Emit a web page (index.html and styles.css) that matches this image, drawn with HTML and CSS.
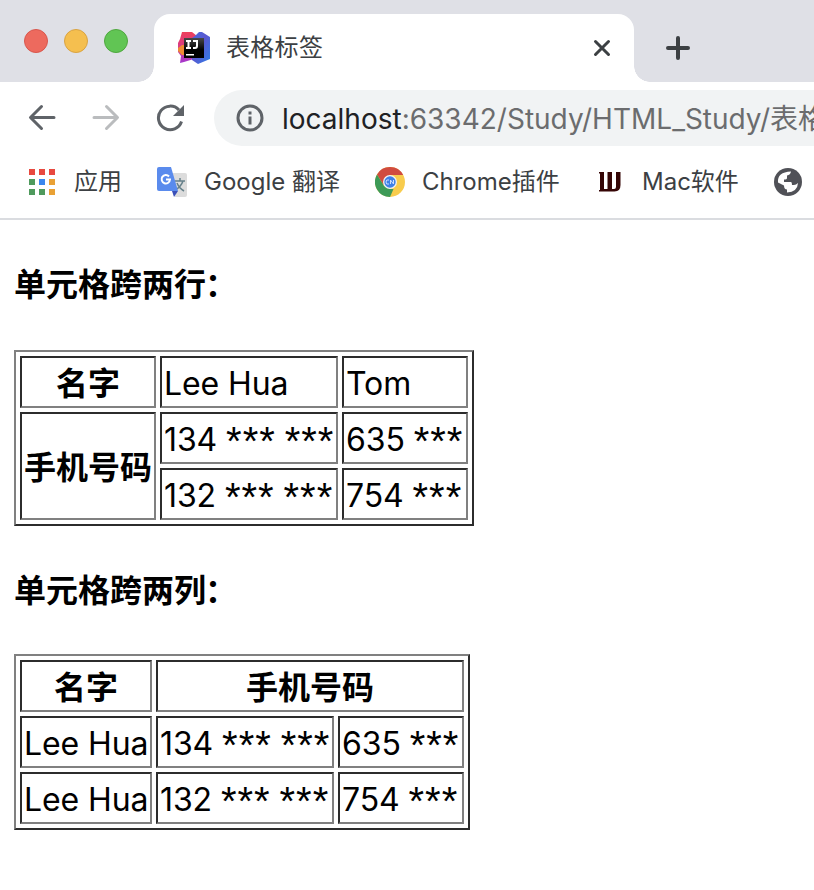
FILE: index.html
```html
<!DOCTYPE html>
<html lang="zh">
<head>
<meta charset="utf-8">
<title>表格标签</title>
<link rel="stylesheet" href="styles.css">
</head>
<body>
<header class="browser">
  <div class="tabstrip">
    <div class="lights"><i class="light red"></i><i class="light yellow"></i><i class="light green"></i></div>
    <div class="tab">
      <svg class="favicon" width="34" height="34" viewBox="0 0 34 34">
        <defs>
          <linearGradient id="idea-blue" x1="0" y1="0" x2="1" y2="1"><stop offset="0" stop-color="#4569e0"/><stop offset=".45" stop-color="#5b58cf"/><stop offset="1" stop-color="#2b7de9"/></linearGradient>
          <linearGradient id="idea-red" x1="0" y1="0" x2="0" y2="1"><stop offset="0" stop-color="#ee3f5a"/><stop offset=".4" stop-color="#dc3c80"/><stop offset="1" stop-color="#a336cf"/></linearGradient>
          <linearGradient id="idea-black" x1="0" y1="0" x2="0" y2="1"><stop offset="0" stop-color="#484848"/><stop offset=".6" stop-color="#000"/></linearGradient>
        </defs>
        <path fill="url(#idea-red)" d="M5 1h10l5 4v22l-13 4-4 1 1-7-3-4V12l2-4z"/>
        <path fill="#ef8a35" d="M1 17l4-3h4v10H5l-4-4z"/>
        <path fill="url(#idea-blue)" d="M18 5l4-4h3l8 5v22l-12 5-6-4V7z"/>
        <path fill="url(#idea-black)" d="M7 7h20v20H7z"/>
        <path fill="none" stroke="#fff" stroke-width="2" d="M9 10h5M11.500 10v7M9 17h5M16 10h4v5q0 2-2 2h-2"/>
        <path fill="#fff" d="M9 23h8v1.500H9z"/>
      </svg>
      <span class="tab-title">表格标签</span>
      <svg class="close" width="18" height="18" viewBox="0 0 18 18"><path d="M2.500 2.500l13 13M15.500 2.500l-13 13"/></svg>
    </div>
    <svg class="newtab" width="26" height="26" viewBox="0 0 26 26"><path d="M13 3v20M3 13h20"/></svg>
  </div>
  <nav class="toolbar">
    <svg class="nav" width="28" height="28" viewBox="0 0 28 28"><path d="M26 13.500H3M13.500 2.500L2.500 13.500 13.500 24.500"/></svg>
    <svg class="nav off" width="28" height="28" viewBox="0 0 28 28"><path d="M2 13.500h23M14.500 2.500L25.500 13.500 14.500 24.500"/></svg>
    <svg class="nav reload" width="30" height="30" viewBox="0 0 30 30"><path d="M25.500 18.500A11.800 11.800 0 1 1 23 7"/><path class="fill" d="M28 2v11H17z"/></svg>
    <div class="omnibox">
      <svg class="info" width="28" height="28" viewBox="0 0 28 28"><circle cx="14" cy="14" r="12"/><path d="M14 12.500v8M14 7.500v3"/></svg>
      <span class="url"><span class="host">localhost</span>:63342/Study/HTML_Study/表格</span>
    </div>
  </nav>
  <nav class="bookmarks">
    <svg class="apps" width="26" height="26" viewBox="0 0 26 26"><path fill="#e8493f" d="M0 0h6v6H0zM10 0h6v6h-6zM20 0h6v6h-6z"/><path fill="#4f9a5d" d="M0 10h6v6H0zM0 20h6v6H0zM10 20h6v6h-6z"/><path fill="#3b87ee" d="M10 10h6v6h-6z"/><path fill="#e9a135" d="M20 10h6v6h-6zM20 20h6v6h-6z"/></svg>
    <span class="label apps-label">应用</span>
    <svg class="translate" width="30" height="30" viewBox="0 0 30 30">
      <path fill="#dcdcdc" d="M14 6h14q2 0 2 2v20q0 2-2 2H18z"/>
      <path fill="none" stroke="#66808a" stroke-width="1.500" d="M18 14h10M23 11v3M26 14q-2 6-8 9M20 16q2 5 7 8"/>
      <path fill="#3a4fb8" d="M15 24h6l-4 6z"/>
      <path fill="#5a8bed" d="M2 0h12l7 24H2q-2 0-2-2V2q0-2 2-2z"/>
      <path fill="none" stroke="#fff" stroke-width="2" d="M12 9.500A4.200 4.200 0 1 0 13 12.500H9"/>
    </svg>
    <span class="label translate-label">Google 翻译</span>
    <svg class="chrome" width="30" height="30" viewBox="0 0 30 30">
      <circle cx="15" cy="15" r="15" fill="#f8cc4d"/>
      <path fill="#d04b40" d="M2 7.500A15 15 0 0 1 28.200 8H15L8.800 18.500z"/>
      <path fill="#3d9a57" d="M2 7.500L8.800 18.500 15 22h3.500L15 30A15 15 0 0 1 2 7.500z"/>
      <circle cx="15" cy="15" r="7" fill="#f2f2f2"/><circle cx="15" cy="15" r="5.700" fill="#3f80e8"/>
      <path fill="none" stroke="#c9dcff" stroke-width="1" d="M14 13q-3-1-3 2t3 2M15.500 17v-4l3 4v-4"/>
    </svg>
    <span class="label chrome-label">Chrome插件</span>
    <svg class="wicon" width="22" height="20" viewBox="0 0 22 20"><path fill="#350505" d="M0 0h5v17h3.500V0H13v17h2q2 0 2-2V0h4.500v13q0 6.500-6 6.500H0V18h1V1.500H0z"/></svg>
    <span class="label mac-label">Mac软件</span>
    <svg class="globe" width="28" height="28" viewBox="0 0 28 28"><circle cx="14" cy="14" r="14" fill="#505157"/><path fill="#fff" d="M17 3.500Q16.500 7 13 7.500V10q0 1.500-3 1.500V14h7q1 0 1 3h2q2 0 4-2-.5 9-11 9.500v-3q-3 0-3-4L4 14.500Q3 4 17 3.500z"/></svg>
  </nav>
</header>
<main class="page">
  <h4>单元格跨两行<span class="colon">：</span></h4>
  <table>
    <colgroup><col class="c136"><col class="c178"><col class="c126"></colgroup>
    <tr><th>名字</th><td>Lee Hua</td><td>Tom</td></tr>
    <tr><th rowspan="2">手机号码</th><td>134 <span class="mask">***</span> <span class="mask">***</span></td><td>635 <span class="mask">***</span></td></tr>
    <tr><td>132 <span class="mask">***</span> <span class="mask">***</span></td><td>754 <span class="mask">***</span></td></tr>
  </table>
  <h4>单元格跨两列<span class="colon">：</span></h4>
  <table>
    <colgroup><col class="c132"><col class="c178"><col class="c126"></colgroup>
    <tr><th>名字</th><th colspan="2">手机号码</th></tr>
    <tr><td>Lee Hua</td><td>134 <span class="mask">***</span> <span class="mask">***</span></td><td>635 <span class="mask">***</span></td></tr>
    <tr><td>Lee Hua</td><td>132 <span class="mask">***</span> <span class="mask">***</span></td><td>754 <span class="mask">***</span></td></tr>
  </table>
</main>
</body>
</html>
```
FILE: styles.css
```css
* { box-sizing: border-box; }
body { margin: 0; background: #fff; color: #000; overflow: hidden; font-family: Inter, "Noto Sans CJK SC", sans-serif; }
svg { display: block; flex: none; }
.browser { height: 220px; border-bottom: 2px solid #dadce0; }
.tabstrip { display: flex; height: 82px; padding-top: 14px; background: #dfe0e6; }
.lights { display: flex; gap: 16px; width: 154px; padding: 15px 0 0 24px; }
.light { width: 24px; height: 24px; border-radius: 50%; border: 1px solid; }
.red { background: #ed6a5e; border-color: #d8574d; }
.yellow { background: #f5bf4f; border-color: #d9a343; }
.green { background: #61c554; border-color: #4fa73f; }
.tab { position: relative; display: flex; align-items: center; width: 480px; height: 68px; padding: 0 24px 0 23px; border-radius: 16px 16px 0 0; background: #fff; }
.tab::before, .tab::after { content: ""; position: absolute; bottom: 0; width: 16px; height: 16px; }
.tab::before { left: -16px; background: radial-gradient(circle at 0 0, transparent 15.5px, #fff 16px); }
.tab::after { right: -16px; background: radial-gradient(circle at 100% 0, transparent 15.5px, #fff 16px); }
.tab-title { flex: 1; margin-left: 15px; font-size: 24px; letter-spacing: .3px; line-height: 34px; color: #3c4043; }
.close { margin-right: -1px; fill: none; stroke: #3c4043; stroke-width: 3; stroke-linecap: round; }
.newtab { margin: 21px 0 0 31px; fill: none; stroke: #3c4043; stroke-width: 4; stroke-linecap: round; }
.toolbar { display: flex; align-items: center; height: 72px; padding-left: 28px; }
.nav { margin-right: 36px; fill: none; stroke: #5f6368; stroke-width: 3; stroke-linecap: round; stroke-linejoin: round; }
.nav.off { stroke: #babcbe; }
.nav.reload { margin: 0 28px 0 0; stroke-linecap: butt; }
.nav .fill { fill: #5f6368; stroke: none; }
.omnibox { display: flex; align-items: center; flex: 1; min-width: 0; height: 56px; padding-left: 22px; border-radius: 28px 0 0 28px; background: #f1f3f4; overflow: hidden; }
.info { fill: none; stroke: #5f6368; stroke-width: 3; }
.url { margin-left: 18px; padding-top: 1px; font-size: 28px; line-height: 40px; color: #6b6c6e; white-space: nowrap; }
.host { color: #202124; }
.bookmarks { display: flex; align-items: center; height: 56px; padding-left: 29px; }
.label { font-size: 24px; line-height: 34px; white-space: nowrap; color: #3c4043; }
.apps-label { width: 64px; margin: 0 19px; }
.translate-label { width: 152px; margin-left: 17px; }
.chrome { margin-left: 19px; }
.chrome-label { width: 157px; margin-left: 17px; }
.wicon { margin-left: 20px; }
.mac-label { width: 112px; margin-left: 21px; }
.globe { margin-left: 20px; }
.page { padding: 42px 14px 0; }
h4 { height: 46px; margin: 0; font-size: 32px; line-height: 46px; font-weight: 700; }
.colon { margin-left: -1px; font-weight: 600; }
table { table-layout: fixed; width: 460px; margin: 42px 0 40px; border: 2px solid; border-color: #808080 #2c2c2c #2c2c2c #808080; border-spacing: 4px; border-collapse: separate; }
table + h4 { padding-top: 2px; }
table:last-child { width: 456px; }
td, th { height: 52px; padding: 4px 2px 0; border: 2px solid; border-color: #2c2c2c #808080 #808080 #2c2c2c; font-size: 32px; line-height: 44px; white-space: nowrap; }
td { letter-spacing: -.1px; }
.mask { font-family: "Liberation Sans", sans-serif; font-size: 40px; line-height: 0; letter-spacing: 1px; vertical-align: -4px; }
.c136 { width: 136px; }
.c132 { width: 132px; }
.c178 { width: 178px; }
.c126 { width: 126px; }
```
